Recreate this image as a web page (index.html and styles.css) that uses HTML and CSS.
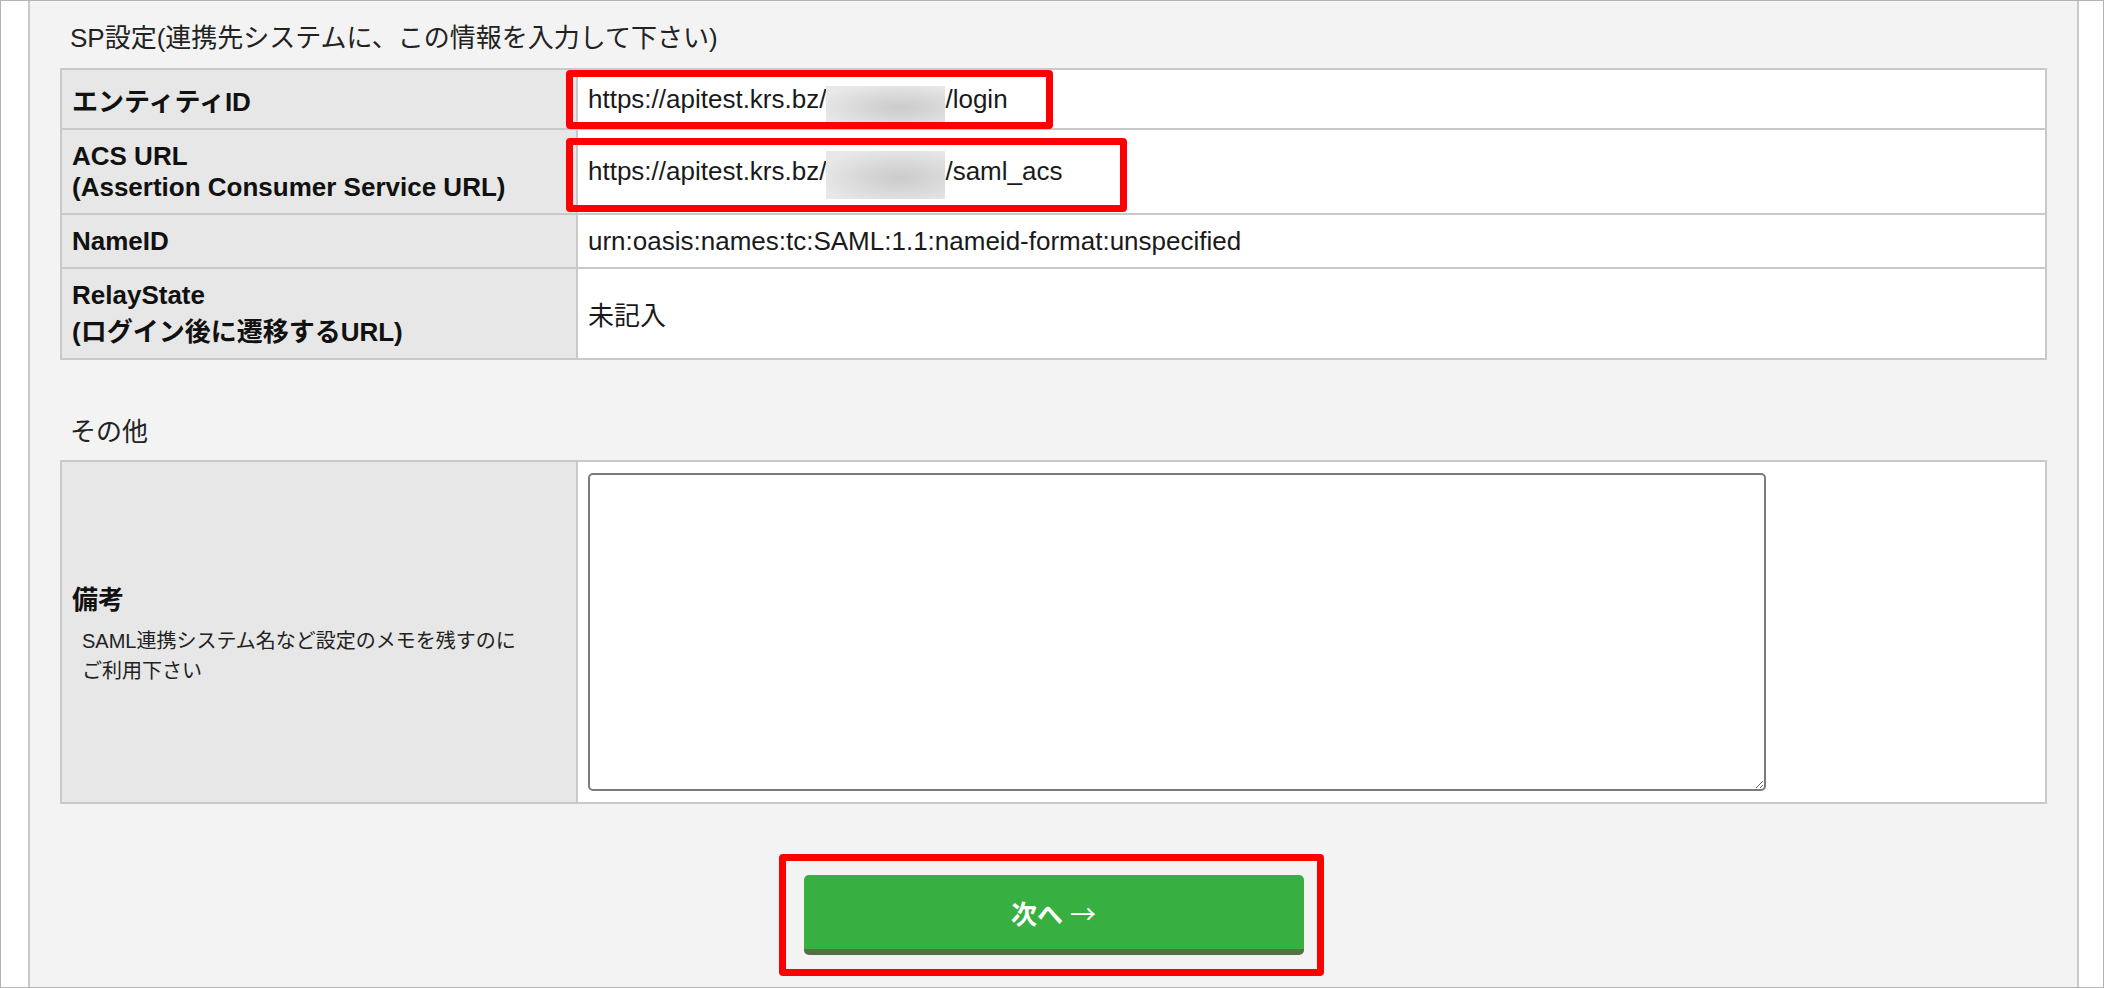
FILE: index.html
```html
<!DOCTYPE html>
<html lang="ja">
<head>
  <meta charset="UTF-8" />
  <meta name="viewport" content="width=device-width, initial-scale=1.0" />
  <title>SAML連携設定</title>
  <link rel="stylesheet" href="styles.css">
</head>
<body>
  <div class="frame">
    <div class="panel">
      <!-- SP設定 -->
      <h2 class="section-title">SP設定(連携先システムに、この情報を入力して下さい)</h2>
      <table class="form-table sp-table">
        <tr>
          <th>エンティティID</th>
          <td>https://apitest.krs.bz/<span class="masked masked-sm"></span>/login</td>
        </tr>
        <tr>
          <th>ACS URL<br>(Assertion Consumer Service URL)</th>
          <td>https://apitest.krs.bz/<span class="masked masked-lg"></span>/saml_acs</td>
        </tr>
        <tr>
          <th>NameID</th>
          <td>urn:oasis:names:tc:SAML:1.1:nameid-format:unspecified</td>
        </tr>
        <tr>
          <th>RelayState<br>(ログイン後に遷移するURL)</th>
          <td>未記入</td>
        </tr>
      </table>

      <!-- その他 -->
      <h2 class="section-title section-gap">その他</h2>
      <table class="form-table">
        <tr>
          <th>備考
            <p class="note">SAML連携システム名など設定のメモを残すのに<br>ご利用下さい</p>
          </th>
          <td><textarea class="memo"></textarea></td>
        </tr>
      </table>

      <div class="actions">
        <button class="btn-next" type="button">次へ <span class="arrow">→</span></button>
      </div>
    </div>

    <!-- 注釈の赤枠 -->
    <span class="mark mark-entity"></span>
    <span class="mark mark-acs"></span>
    <span class="mark mark-next"></span>
  </div>
</body>
</html>
```

FILE: styles.css
```css
body {
  margin: 0;
  background-color: #ffffff;
  font-family: "Liberation Sans", "Noto Sans CJK JP", sans-serif;
  color: #1a1a1a;
}
.frame {
  position: relative;
  height: 988px;
  box-sizing: border-box;
  border: 1px solid #b4b4b4;
  overflow: hidden;
}
.panel {
  height: 100%;
  box-sizing: border-box;
  margin: 0 24px 0 27px;
  padding: 16px 30px 0;
  background-color: #f3f3f3;
  border-left: 2px solid #c9c9c9;
  border-right: 2px solid #c9c9c9;
}
.section-title {
  margin: 0 0 14px;
  padding-left: 10px;
  font-size: 26px;
  font-weight: normal;
  color: #222;
}
.section-gap {
  margin-top: 51px;
  margin-bottom: 12px;
}
.form-table {
  width: 100%;
  border-collapse: collapse;
  table-layout: fixed;
  font-size: 26px;
}
.form-table th,
.form-table td {
  border: 2px solid #c9c9c9;
  padding: 11px 10px;
  vertical-align: middle;
  text-align: left;
}
.sp-table th,
.sp-table td {
  padding-top: 10.5px;
  padding-bottom: 10.5px;
}
.form-table th {
  width: 494px;
  background-color: #e6e7e6;
  font-weight: bold;
  color: #111;
}
.form-table td {
  background-color: #ffffff;
  color: #1a1a1a;
}
/* ぼかし部分 */
.masked {
  display: inline-block;
  width: 119px;
  vertical-align: -6px;
  background: radial-gradient(ellipse at 62% 55%, #cbcbcb 0%, #d9d9d9 40%, #e8e8e8 80%);
}
.masked-sm {
  height: 39px;
  margin-bottom: -11px;
}
.masked-lg {
  height: 48px;
  margin-top: -6px;
  margin-bottom: -13px;
}
.note {
  margin: 10px 0 0;
  padding-left: 10px;
  font-size: 20px;
  font-weight: normal;
  line-height: 30px;
  color: #222;
}
.memo {
  display: block;
  width: 1178px;
  height: 318px;
  box-sizing: border-box;
  border: 2px solid #7b7b7b;
  border-radius: 5px;
  background-color: #ffffff;
}
.actions {
  display: flex;
  justify-content: center;
  margin-top: 71px;
}
.btn-next {
  width: 500px;
  height: 80px;
  border: 0;
  border-bottom: 6px solid #52733f;
  border-radius: 5px;
  background-color: #37b041;
  color: #ffffff;
  font-family: "Liberation Sans", "Noto Sans CJK JP", sans-serif;
  font-size: 26px;
  font-weight: bold;
}
.btn-next .arrow {
  font-family: "Noto Sans CJK JP", sans-serif;
  font-weight: normal;
}
.mark {
  position: absolute;
  box-sizing: border-box;
  border: 7px solid #ff0000;
  border-radius: 4px;
}
.mark-entity {
  left: 565px;
  top: 69px;
  width: 487px;
  height: 59px;
}
.mark-acs {
  left: 565px;
  top: 137px;
  width: 561px;
  height: 74px;
}
.mark-next {
  left: 778px;
  top: 853px;
  width: 545px;
  height: 122px;
}
```
